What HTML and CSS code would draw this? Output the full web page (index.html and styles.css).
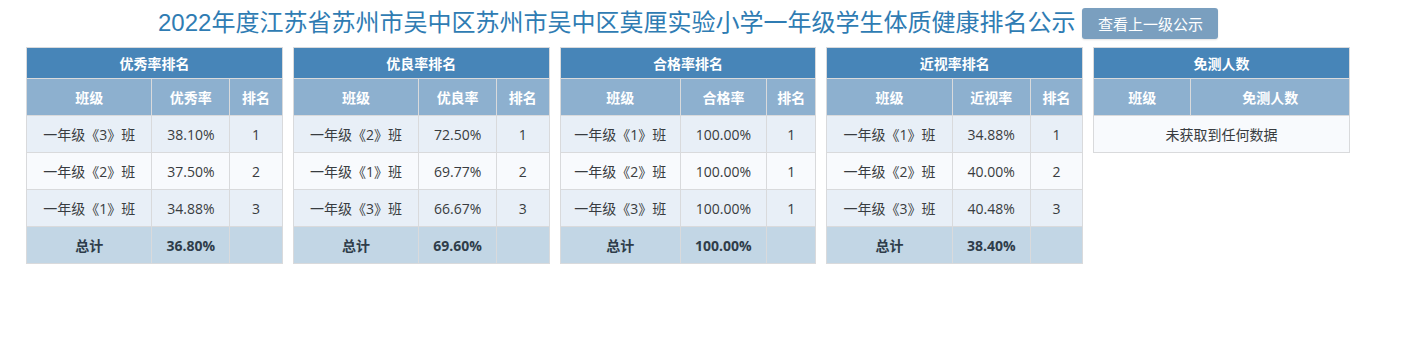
FILE: index.html
```html
<!DOCTYPE html>
<html lang="zh">
<head>
<meta charset="utf-8">
<title>体质健康排名公示</title>
<link rel="stylesheet" href="styles.css">
</head>
<body>
<div class="page">
  <div class="heading">
    <h1 class="title">2022年度江苏省苏州市吴中区苏州市吴中区莫厘实验小学一年级学生体质健康排名公示</h1>
    <button class="up-btn" type="button">查看上一级公示</button>
  </div>
  <div class="boards">
    <table class="rank t1">
      <colgroup><col class="c1"><col class="c2"><col class="c3"></colgroup>
      <thead>
        <tr><th class="cap" colspan="3">优秀率排名</th></tr>
        <tr class="sub"><th>班级</th><th>优秀率</th><th>排名</th></tr>
      </thead>
      <tbody>
        <tr class="odd"><td>一年级《3》班</td><td>38.10%</td><td>1</td></tr>
        <tr class="even"><td>一年级《2》班</td><td>37.50%</td><td>2</td></tr>
        <tr class="odd"><td>一年级《1》班</td><td>34.88%</td><td>3</td></tr>
        <tr class="sum"><td>总计</td><td>36.80%</td><td></td></tr>
      </tbody>
    </table>
    <table class="rank t1">
      <colgroup><col class="c1"><col class="c2"><col class="c3"></colgroup>
      <thead>
        <tr><th class="cap" colspan="3">优良率排名</th></tr>
        <tr class="sub"><th>班级</th><th>优良率</th><th>排名</th></tr>
      </thead>
      <tbody>
        <tr class="odd"><td>一年级《2》班</td><td>72.50%</td><td>1</td></tr>
        <tr class="even"><td>一年级《1》班</td><td>69.77%</td><td>2</td></tr>
        <tr class="odd"><td>一年级《3》班</td><td>66.67%</td><td>3</td></tr>
        <tr class="sum"><td>总计</td><td>69.60%</td><td></td></tr>
      </tbody>
    </table>
    <table class="rank t3">
      <colgroup><col class="c1"><col class="c2"><col class="c3"></colgroup>
      <thead>
        <tr><th class="cap" colspan="3">合格率排名</th></tr>
        <tr class="sub"><th>班级</th><th>合格率</th><th>排名</th></tr>
      </thead>
      <tbody>
        <tr class="odd"><td>一年级《1》班</td><td>100.00%</td><td>1</td></tr>
        <tr class="even"><td>一年级《2》班</td><td>100.00%</td><td>1</td></tr>
        <tr class="odd"><td>一年级《3》班</td><td>100.00%</td><td>1</td></tr>
        <tr class="sum"><td>总计</td><td>100.00%</td><td></td></tr>
      </tbody>
    </table>
    <table class="rank t1">
      <colgroup><col class="c1"><col class="c2"><col class="c3"></colgroup>
      <thead>
        <tr><th class="cap" colspan="3">近视率排名</th></tr>
        <tr class="sub"><th>班级</th><th>近视率</th><th>排名</th></tr>
      </thead>
      <tbody>
        <tr class="odd"><td>一年级《1》班</td><td>34.88%</td><td>1</td></tr>
        <tr class="even"><td>一年级《2》班</td><td>40.00%</td><td>2</td></tr>
        <tr class="odd"><td>一年级《3》班</td><td>40.48%</td><td>3</td></tr>
        <tr class="sum"><td>总计</td><td>38.40%</td><td></td></tr>
      </tbody>
    </table>
    <table class="rank t5">
      <colgroup><col class="c1"><col class="c2"></colgroup>
      <thead>
        <tr><th class="cap" colspan="2">免测人数</th></tr>
        <tr class="sub"><th>班级</th><th>免测人数</th></tr>
      </thead>
      <tbody>
        <tr class="even"><td colspan="2">未获取到任何数据</td></tr>
      </tbody>
    </table>
  </div>
</div>
</body>
</html>
```

FILE: styles.css
```css
* { box-sizing: border-box; }
html, body { margin: 0; padding: 0; background: #fff; }
body {
  font-family: "Open Sans", "Noto Sans CJK SC", sans-serif;
  color: #333;
}
.page { width: 1410px; }
.heading {
  display: flex;
  align-items: center;
  padding: 6px 0 0 158px;
  height: 40px;
}
.title {
  margin: 0;
  font-family: "Liberation Sans", "Noto Sans CJK SC", sans-serif;
  font-weight: normal;
  font-size: 24px;
  line-height: 28px;
  color: #2f7cb3;
  white-space: nowrap;
}
.up-btn {
  margin-left: 7px;
  width: 136px;
  height: 31px;
  border: none;
  border-radius: 3px;
  background: #7a9fbf;
  color: #fff;
  font-family: "Noto Sans CJK SC", sans-serif;
  font-size: 15px;
  line-height: 31px;
  padding: 0;
  box-shadow: 0 1px 2px rgba(0,0,0,0.12);
}
.boards {
  display: grid;
  grid-template-columns: repeat(5, 1fr);
  column-gap: 10px;
  align-items: start;
  padding: 7px 60px 0 26px;
}
.rank {
  width: 100%;
  border-collapse: collapse;
  table-layout: fixed;
  font-size: 14px;
  text-align: center;
}
.rank th, .rank td {
  border: 1px solid #d9dadc;
  padding: 0;
  font-family: "Open Sans", "Noto Sans CJK SC", sans-serif;
}
.rank .cap {
  height: 31px;
  background: #4785b8;
  color: #fff;
  font-size: 14px;
  font-weight: bold;
}
.rank .sub th {
  height: 37px;
  background: #8db0cf;
  color: #fff;
  font-size: 14px;
  font-weight: bold;
}
.rank td { height: 37px; color: #383c40; }
.rank .odd td { background: #e8eff7; }
.rank .even td { background: #f8fafd; }
.rank .sum td { background: #c2d6e5; font-weight: bold; color: #2f3d4a; }
.t1 .c1 { width: 49%; }
.t1 .c2 { width: 30.5%; }
.t1 .c3 { width: 20.5%; }
.t3 .c1 { width: 47%; }
.t3 .c2 { width: 33.7%; }
.t3 .c3 { width: 19.3%; }
.t5 .c1 { width: 38%; }
.t5 .c2 { width: 62%; }
```
